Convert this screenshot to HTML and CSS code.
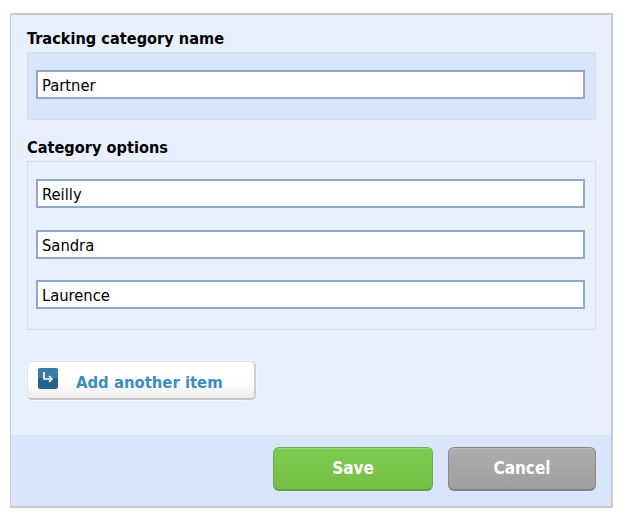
FILE: index.html
```html
<!DOCTYPE html>
<html lang="en">
<head>
    <meta charset="UTF-8">
    <title>Tracking category</title>
    <link rel="stylesheet" href="styles.css">
</head>
<body>
    <form class="dialog">
        <div class="content">
            <h2 class="label">Tracking category name</h2>
            <div class="box box-name">
                <input class="field" type="text" value="Partner">
            </div>

            <h2 class="label label-options">Category options</h2>
            <div class="box box-options">
                <input class="field" type="text" value="Reilly">
                <input class="field" type="text" value="Sandra">
                <input class="field" type="text" value="Laurence">
            </div>

            <button class="add-button" type="button">
                <span class="add-icon">
                    <svg width="20" height="21" viewBox="0 0 20 21">
                        <rect width="20" height="21" rx="2.5" fill="#26648f"/>
                        <path d="M0 2.5 a2.5 2.5 0 0 1 2.5-2.5 h15 a2.5 2.5 0 0 1 2.5 2.5 v7.5 h-20z" fill="#3a7ba8"/>
                        <path d="M6 4 v7 h7" fill="none" stroke="#fff" stroke-width="1.7"/>
                        <path d="M11 8 l3 3 l-3 3" fill="none" stroke="#fff" stroke-width="1.7"/>
                    </svg>
                </span>
                <span class="add-text">Add another item</span>
            </button>
        </div>

        <div class="footer">
            <button class="button save" type="button">Save</button>
            <button class="button cancel" type="button">Cancel</button>
        </div>
    </form>
</body>
</html>
```

FILE: styles.css
```css
body {
    margin: 0;
    padding: 13px 0 0 10px;
    background-color: #ffffff;
    font-family: "DejaVu Sans Condensed", "DejaVu Sans", Verdana, sans-serif;
}
.dialog {
    width: 600px;
    height: 491px;
    display: flex;
    flex-direction: column;
    background-color: #e8f0fe;
    border: 2px solid #c6c9cd;
    border-width: 2px 2px 2px 1px;
}
.content {
    flex: 1;
    padding: 14px 15px 0 16px;
}
.label {
    margin: 0;
    height: 23px;
    line-height: 20px;
    font-size: 16.2px;
    font-weight: bold;
    color: #000000;
}
.label-options {
    margin-top: 18px;
}
.box {
    display: flex;
    flex-direction: column;
    gap: 21.5px;
    width: 569px;
    border: 1px solid #d3dbe8;
    padding: 17px 10px 21px 8px;
    box-sizing: border-box;
}
.box-name {
    height: 68px;
    background-color: #d9e5fb;
}
.box-options {
    height: 169px;
}
.field {
    display: block;
    box-sizing: border-box;
    width: 549px;
    height: 29px;
    flex: none;
    margin: 0;
    padding: 2px 4px 0;
    background-color: #ffffff;
    border: 2px solid #8fa8c8;
    font-family: inherit;
    font-size: 16.4px;
    color: #000000;
    outline: none;
}
.add-button {
    display: flex;
    align-items: flex-start;
    width: 229px;
    height: 39px;
    margin-top: 31px;
    padding: 6px 0 0 10px;
    background: linear-gradient(#ffffff 55%, #eeeeee);
    border: 1px solid #e0e2e6;
    border-bottom: 2px solid #c4c4c4;
    border-right: 2px solid #cfcfcf;
    border-radius: 5px;
    box-shadow: 0 0 0 1px #f3f6fd;
    box-sizing: border-box;
    font-family: inherit;
}
.add-icon {
    display: block;
    height: 21px;
}
.add-text {
    margin: 5px 0 0 18px;
    font-size: 16.5px;
    font-weight: bold;
    color: #3a8dc0;
}
.footer {
    display: flex;
    justify-content: flex-end;
    gap: 15px;
    height: 71px;
    padding: 12px 15px 0 0;
    box-sizing: border-box;
    background-color: #d9e5fb;
}
.button {
    height: 44px;
    padding: 0 0 1px;
    border-radius: 6px;
    font-family: inherit;
    font-size: 17px;
    font-weight: bold;
    color: #ffffff;
    box-sizing: border-box;
}
.save {
    width: 160px;
    background: linear-gradient(#7fcb50, #76bf47);
    border: 1px solid #6cab42;
    border-bottom: 2px solid #64a03c;
    box-shadow: inset 0 1px 0 #98d873;
}
.cancel {
    width: 148px;
    background: linear-gradient(#adadad, #9e9e9e);
    border: 1px solid #888888;
    border-bottom: 2px solid #828282;
    box-shadow: inset 0 1px 0 #bcbcbc;
}
```
